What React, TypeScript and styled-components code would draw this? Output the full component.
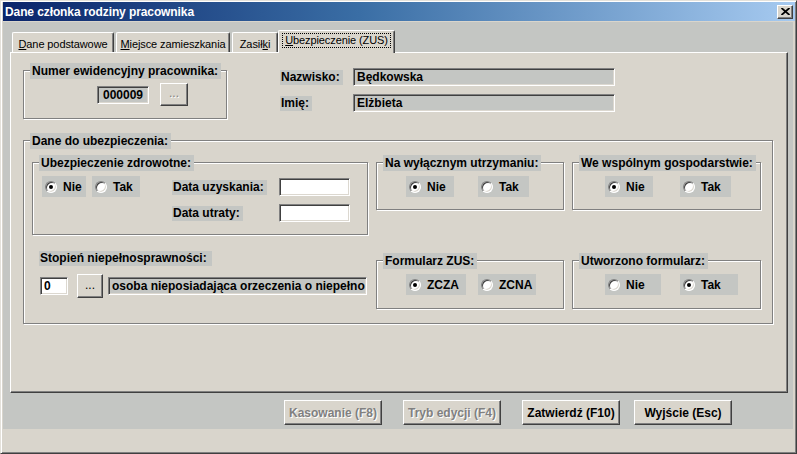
import React from 'react';
import styled, { createGlobalStyle } from 'styled-components';

const FACE = '#D9D5CC';
const GRAY = '#C4C6C3';
const DARK = '#404040';
const SHADOW = '#808080';

const GlobalStyle = createGlobalStyle`
    html, body {
        margin: 0;
        padding: 0;
        background: ${FACE};
    }
    body {
        font-family: "Liberation Sans", Arial, sans-serif;
        font-size: 12px;
        color: #000;
    }
`;

const Window = styled.div`
    width: 797px;
    height: 454px;
    box-sizing: border-box;
    background: ${FACE};
    border: 1px solid;
    border-color: #e4e1da ${DARK} ${DARK} #e4e1da;
    box-shadow: inset 1px 1px 0 #fff, inset -1px -1px 0 ${SHADOW};
    padding: 1px;
    display: flex;
    flex-direction: column;
`;

const TitleBar = styled.div`
    height: 19px;
    margin-left: 1px;
    display: flex;
    align-items: center;
    justify-content: space-between;
    padding: 0 2px 0 2px;
    background: linear-gradient(to right, #0a246a 0%, #3a6ea5 45%, #a6caf0 100%);
`;

const Title = styled.span`
    color: #fff;
    font-weight: bold;
    font-size: 12px;
    letter-spacing: -0.1px;
`;

const CloseButton = styled.button`
    width: 16px;
    height: 14px;
    padding: 0;
    box-sizing: border-box;
    background: ${FACE};
    border: 1px solid;
    border-color: #fff ${DARK} ${DARK} #fff;
    box-shadow: inset -1px -1px 0 ${SHADOW};
    display: flex;
    align-items: center;
    justify-content: center;
`;

const Body = styled.div`
    height: 407px;
    margin: 1px 2px 0 1px;
    background: ${GRAY};
    padding-top: 8px;
    box-sizing: border-box;
    display: flex;
    flex-direction: column;
`;

const TabStrip = styled.div`
    display: flex;
    align-items: flex-end;
    margin-left: 9px;
    height: 22px;
`;

const Tab = styled.div<{ $w: number; $active?: boolean }>`
    position: relative;
    z-index: ${p => (p.$active ? 1 : 0)};
    width: ${p => p.$w}px;
    height: ${p => (p.$active ? 23 : 20)}px;
    margin-bottom: ${p => (p.$active ? -1 : 0)}px;
    margin-left: ${p => (p.$active ? -2 : 0)}px;
    margin-right: ${p => (p.$active ? 0 : 2)}px;
    box-sizing: border-box;
    background: ${FACE};
    border-top: 1px solid #fff;
    border-left: 1px solid #fff;
    border-right: 1px solid ${DARK};
    box-shadow: inset -1px 0 0 ${SHADOW};
    border-radius: 2px 2px 0 0;
    display: flex;
    justify-content: center;
    align-items: flex-start;
    padding-top: ${p => (p.$active ? 2 : 4)}px;
    font-size: 11px;
    white-space: nowrap;
`;

const TabLabel = styled.span<{ $focus?: boolean }>`
    padding: 0 2px;
    line-height: 13px;
    letter-spacing: -0.1px;
    border: 1px dotted ${p => (p.$focus ? '#000' : 'transparent')};
`;

const Panel = styled.div`
    width: 778px;
    height: 341px;
    margin-left: 7px;
    box-sizing: border-box;
    background: ${FACE};
    border: 1px solid;
    border-color: #fff ${DARK} ${DARK} #fff;
    box-shadow: inset -1px -1px 0 ${SHADOW};
    padding: 15px 0 0 12px;
    display: flex;
    flex-direction: column;
`;

const TopRow = styled.div`
    display: flex;
    align-items: flex-start;
`;

const Group = styled.div<{ $w: number; $h: number; $top?: number }>`
    width: ${p => p.$w}px;
    height: ${p => p.$h}px;
    margin-top: ${p => p.$top ?? 0}px;
    flex-shrink: 0;
    box-sizing: border-box;
    border: 1px solid ${SHADOW};
    box-shadow: inset 1px 1px 0 #fff, 1px 1px 0 #fff;
    display: flex;
    flex-direction: column;
`;

const Legend = styled.div`
    align-self: flex-start;
    margin: -8px 0 0 6px;
    height: 16px;
    line-height: 16px;
    padding: 0 3px 0 2px;
    background: ${GRAY};
    font-weight: bold;
    white-space: nowrap;
`;

const Label = styled.span`
    justify-self: start;
    align-self: center;
    height: 15px;
    line-height: 15px;
    padding: 0 3px 0 1px;
    background: ${GRAY};
    font-weight: bold;
    white-space: nowrap;
`;

const CaptionLabel = styled(Label)`
    align-self: flex-start;
    padding-right: 5px;
`;

const Field = styled.div<{ $w: number; $center?: boolean; $white?: boolean }>`
    width: ${p => p.$w}px;
    height: 18px;
    box-sizing: border-box;
    background: ${p => (p.$white ? '#fff' : GRAY)};
    border: 1px solid;
    border-color: ${SHADOW} #fff #fff ${SHADOW};
    box-shadow: inset 1px 1px 0 ${DARK}, inset -1px -1px 0 #dcd8d0;
    padding: 0 3px;
    line-height: 16px;
    font-weight: bold;
    text-align: ${p => (p.$center ? 'center' : 'left')};
    white-space: nowrap;
    overflow: hidden;
`;

const DotsButton = styled.button<{ $w: number; $h: number; $disabled?: boolean }>`
    width: ${p => p.$w}px;
    height: ${p => p.$h}px;
    padding: 0 0 3px;
    box-sizing: border-box;
    background: ${FACE};
    border: 1px solid;
    border-color: #fff ${DARK} ${DARK} #fff;
    box-shadow: inset -1px -1px 0 ${SHADOW};
    font-family: inherit;
    font-size: 12px;
    color: ${p => (p.$disabled ? SHADOW : '#000')};
    text-shadow: ${p => (p.$disabled ? '1px 1px 0 #fff' : 'none')};
`;

const NumberRow = styled.div`
    display: flex;
    align-items: center;
    gap: 11px;
    margin-top: 4px;
    padding-left: 73px;
`;

const NameGrid = styled.div`
    display: grid;
    grid-template-columns: 73px 262px;
    grid-auto-rows: 18px;
    row-gap: 8px;
    margin-left: 53px;
`;

const SubRow = styled.div<{ $top: number }>`
    display: flex;
    align-items: flex-start;
    gap: 8px;
    margin-top: ${p => p.$top}px;
    padding-left: 8px;
`;

const Radios = styled.div<{ $pad: number; $gap: number }>`
    display: flex;
    gap: ${p => p.$gap}px;
    margin-top: 5px;
    padding-left: ${p => p.$pad}px;
`;

const RadioItem = styled.div<{ $w: number }>`
    width: ${p => p.$w}px;
    height: 21px;
    box-sizing: border-box;
    background: ${GRAY};
    display: flex;
    align-items: center;
    gap: 6px;
    padding-left: 3px;
    font-weight: bold;
    white-space: nowrap;
`;

const RadioCircle = styled.span`
    width: 12px;
    height: 12px;
    flex-shrink: 0;
    box-sizing: border-box;
    border-radius: 50%;
    background: #fff;
    border: 1px solid;
    border-color: ${SHADOW} #fff #fff ${SHADOW};
    box-shadow: inset 1px 1px 0 ${DARK}, inset -1px -1px 0 #dcd8d0;
    display: flex;
    align-items: center;
    justify-content: center;
`;

const RadioDot = styled.span`
    width: 4px;
    height: 4px;
    border-radius: 50%;
    background: #000;
`;

const HealthBody = styled.div`
    display: flex;
    align-items: flex-start;
`;

const DateGrid = styled.div`
    display: grid;
    grid-template-columns: 107px 71px;
    grid-auto-rows: 18px;
    row-gap: 8px;
    margin: 7px 0 0 32px;
`;

const DisabilityColumn = styled.div`
    width: 336px;
    flex-shrink: 0;
    box-sizing: border-box;
    padding: 16px 0 0 7px;
    display: flex;
    flex-direction: column;
    align-items: flex-start;
`;

const DisabilityRow = styled.div`
    display: flex;
    align-items: center;
    margin-top: 8px;
    margin-left: 1px;
`;

const RowButton = styled(DotsButton)`
    margin: 0 5px 0 9px;
`;

const ButtonRow = styled.div`
    display: flex;
    margin: 7px 0 0 281px;
`;

const DialogButton = styled.button<{ $gap: number; $disabled?: boolean }>`
    width: 98px;
    height: 25px;
    margin-right: ${p => p.$gap}px;
    padding: 0;
    box-sizing: border-box;
    background: ${FACE};
    border: 1px solid;
    border-color: #fff ${DARK} ${DARK} #fff;
    box-shadow: inset -1px -1px 0 ${SHADOW};
    font-family: inherit;
    font-size: 12px;
    font-weight: bold;
    color: ${p => (p.$disabled ? SHADOW : '#000')};
    text-shadow: ${p => (p.$disabled ? '1px 1px 0 #fff' : 'none')};
`;

const Radio = ({ label, checked, w }: { label: string; checked?: boolean; w: number }) => (
    <RadioItem $w={w}>
        <RadioCircle>{checked && <RadioDot />}</RadioCircle>
        {label}
    </RadioItem>
);

const CloseIcon = () => (
    <svg width="9" height="7" viewBox="0 0 9 7">
        <path d="M0.5 0 L8.5 7 M8.5 0 L0.5 7" stroke="#000" strokeWidth="1.8" />
    </svg>
);

export default function App() {
    return (
        <>
            <GlobalStyle />
            <Window>
                <TitleBar>
                    <Title>Dane członka rodziny pracownika</Title>
                    <CloseButton>
                        <CloseIcon />
                    </CloseButton>
                </TitleBar>
                <Body>
                    <TabStrip>
                        <Tab $w={102}><TabLabel><u>D</u>ane podstawowe</TabLabel></Tab>
                        <Tab $w={114}><TabLabel><u>M</u>iejsce zamieszkania</TabLabel></Tab>
                        <Tab $w={46}><TabLabel>Zasił<u>k</u>i</TabLabel></Tab>
                        <Tab $w={117} $active><TabLabel $focus><u>U</u>bezpieczenie (ZUS)</TabLabel></Tab>
                    </TabStrip>
                    <Panel>
                        <TopRow>
                            <Group $w={204} $h={49} $top={2}>
                                <Legend>Numer ewidencyjny pracownika:</Legend>
                                <NumberRow>
                                    <Field $w={52} $center>000009</Field>
                                    <DotsButton $w={28} $h={23} $disabled>...</DotsButton>
                                </NumberRow>
                            </Group>
                            <NameGrid>
                                <Label>Nazwisko:</Label>
                                <Field $w={262}>Będkowska</Field>
                                <Label>Imię:</Label>
                                <Field $w={262}>Elżbieta</Field>
                            </NameGrid>
                        </TopRow>

                        <Group $w={750} $h={184} $top={21}>
                            <Legend>Dane do ubezpieczenia:</Legend>
                            <SubRow $top={13}>
                                <Group $w={336} $h={73}>
                                    <Legend>Ubezpieczenie zdrowotne:</Legend>
                                    <HealthBody>
                                        <Radios $pad={9} $gap={6}>
                                            <Radio label="Nie" checked w={44} />
                                            <Radio label="Tak" w={48} />
                                        </Radios>
                                        <DateGrid>
                                            <Label>Data uzyskania:</Label>
                                            <Field $w={71} $white />
                                            <Label>Data utraty:</Label>
                                            <Field $w={71} $white />
                                        </DateGrid>
                                    </HealthBody>
                                </Group>
                                <Group $w={188} $h={48}>
                                    <Legend>Na wyłącznym utrzymaniu:</Legend>
                                    <Radios $pad={29} $gap={24}>
                                        <Radio label="Nie" checked w={48} />
                                        <Radio label="Tak" w={51} />
                                    </Radios>
                                </Group>
                                <Group $w={189} $h={48}>
                                    <Legend>We wspólnym gospodarstwie:</Legend>
                                    <Radios $pad={32} $gap={27}>
                                        <Radio label="Nie" checked w={48} />
                                        <Radio label="Tak" w={51} />
                                    </Radios>
                                </Group>
                            </SubRow>
                            <SubRow $top={0}>
                                <DisabilityColumn>
                                    <CaptionLabel>Stopień niepełnosprawności:</CaptionLabel>
                                    <DisabilityRow>
                                        <Field $w={28} $white>0</Field>
                                        <RowButton $w={26} $h={24}>...</RowButton>
                                        <Field $w={259}>osoba nieposiadająca orzeczenia o niepełno</Field>
                                    </DisabilityRow>
                                </DisabilityColumn>
                                <Group $w={188} $h={49} $top={25}>
                                    <Legend>Formularz ZUS:</Legend>
                                    <Radios $pad={29} $gap={12}>
                                        <Radio label="ZCZA" checked w={60} />
                                        <Radio label="ZCNA" w={58} />
                                    </Radios>
                                </Group>
                                <Group $w={189} $h={49} $top={25}>
                                    <Legend>Utworzono formularz:</Legend>
                                    <Radios $pad={32} $gap={19}>
                                        <Radio label="Nie" w={56} />
                                        <Radio label="Tak" checked w={58} />
                                    </Radios>
                                </Group>
                            </SubRow>
                        </Group>
                    </Panel>
                    <ButtonRow>
                        <DialogButton $gap={21} $disabled>Kasowanie (F8)</DialogButton>
                        <DialogButton $gap={21} $disabled>Tryb edycji (F4)</DialogButton>
                        <DialogButton $gap={14}>Zatwierdź (F10)</DialogButton>
                        <DialogButton $gap={0}>Wyjście (Esc)</DialogButton>
                    </ButtonRow>
                </Body>
            </Window>
        </>
    );
}
